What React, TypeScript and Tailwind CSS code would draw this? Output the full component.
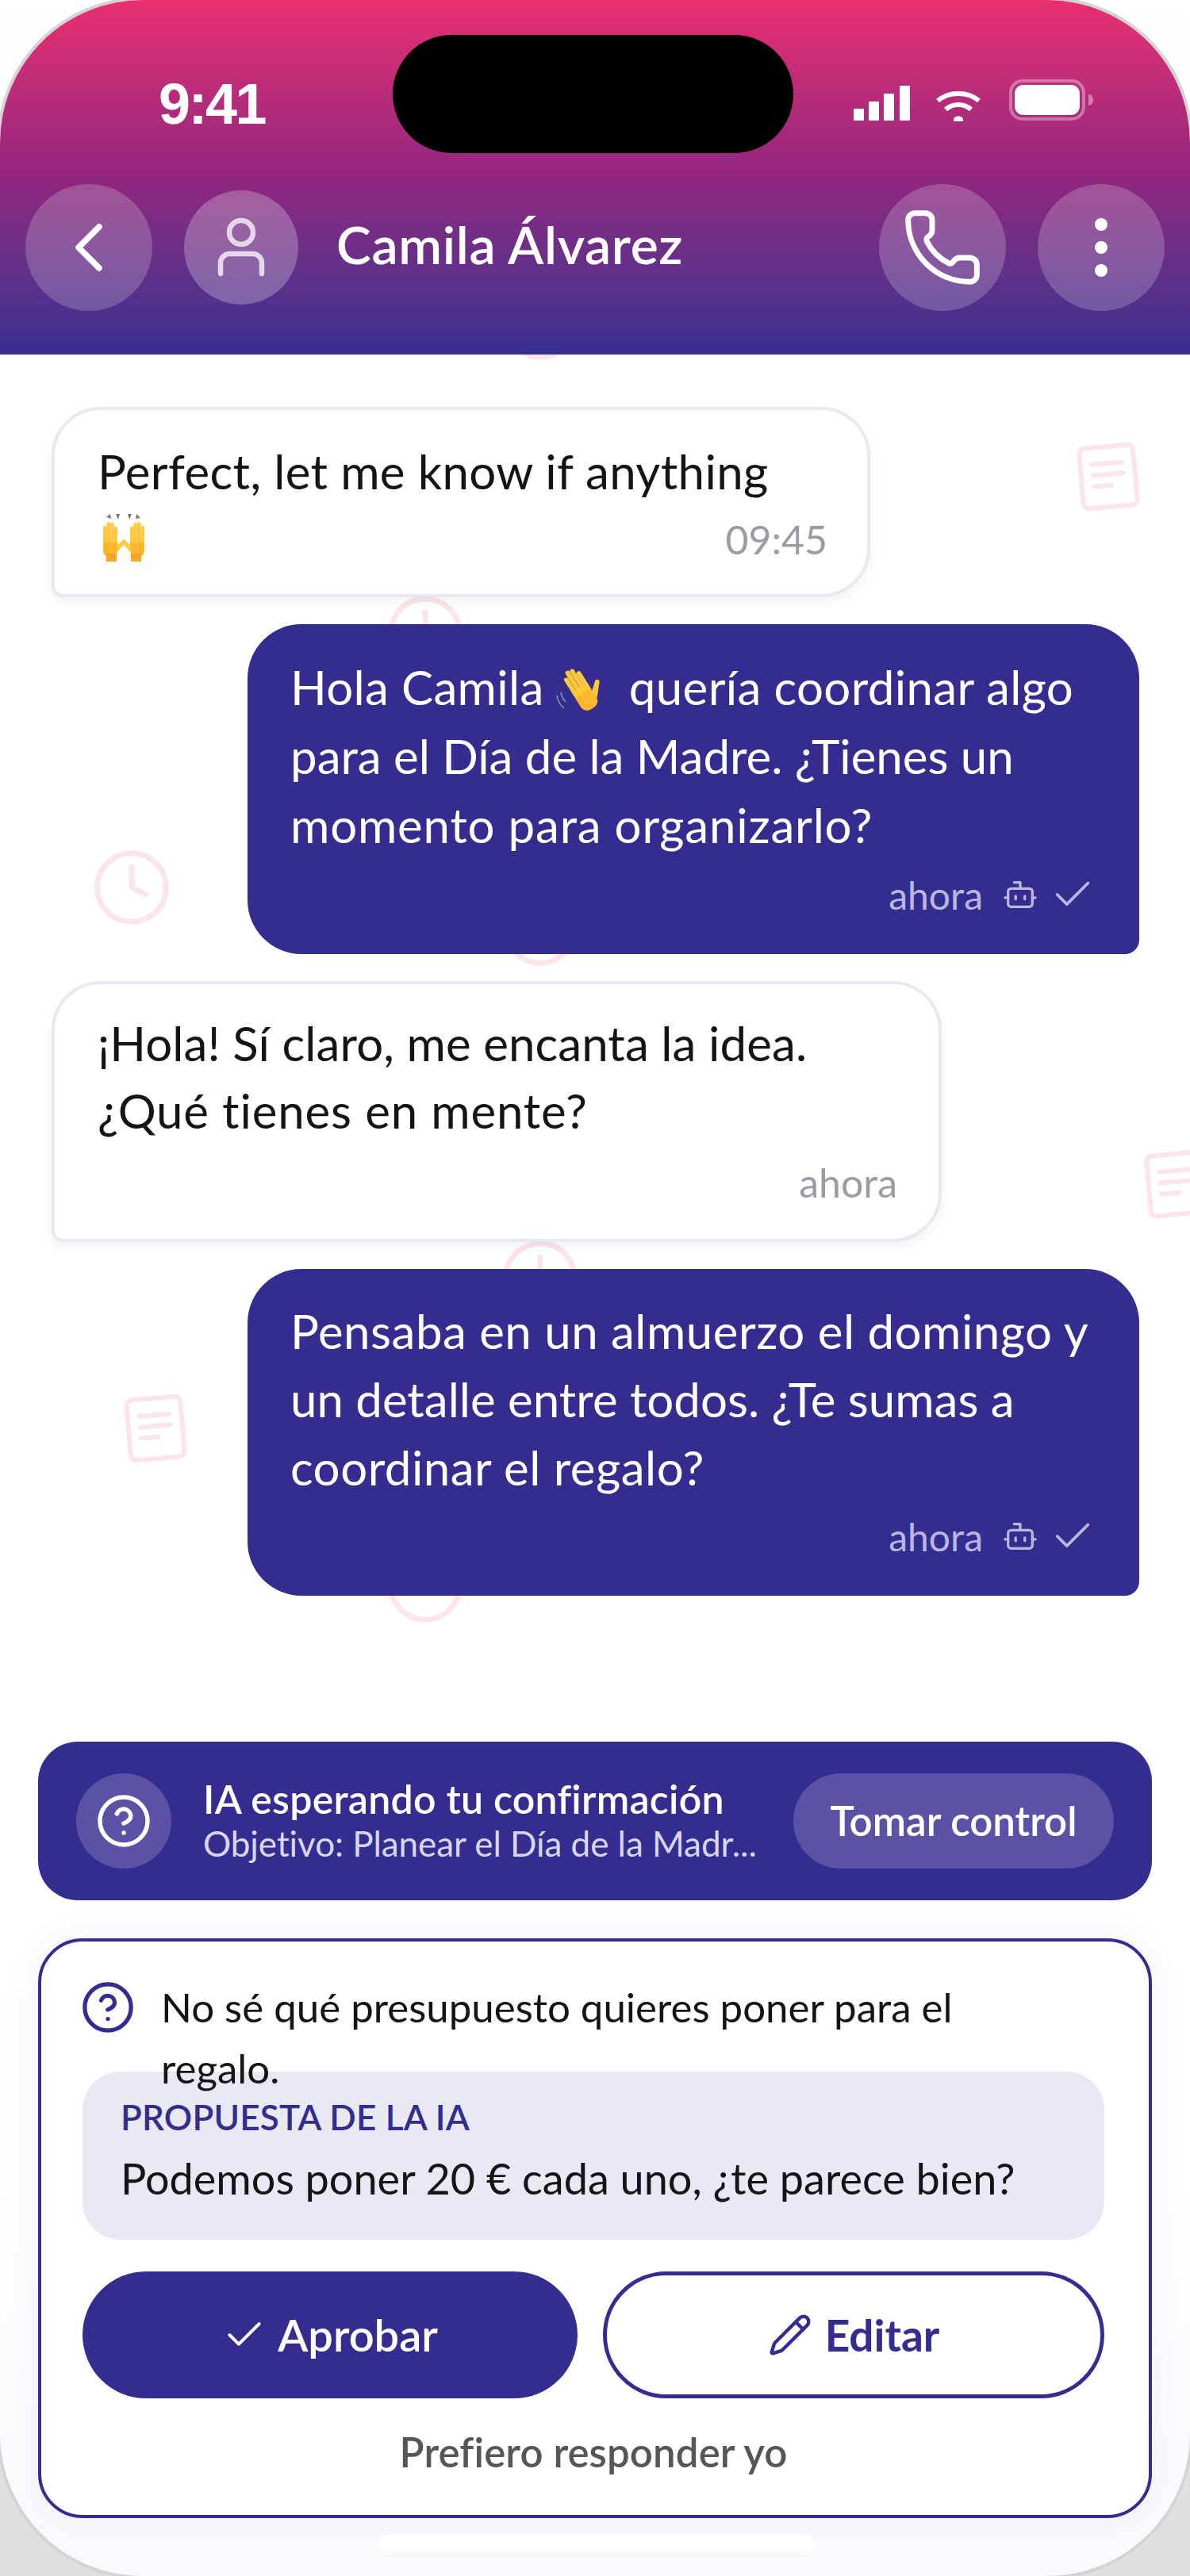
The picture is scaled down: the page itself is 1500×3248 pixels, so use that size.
import { Bot, Check, CircleHelp, Clock, Pencil, Phone } from "lucide-react";

const Hand = ({ x, y, s = 1, r = 0, flip = false }: { x: number; y: number; s?: number; r?: number; flip?: boolean }) => (
  <g transform={`translate(${x} ${y}) rotate(${r}) scale(${flip ? -s : s} ${s})`}>
    <rect x="-9" y="-4" width="18" height="24" rx="7" fill="#FFB52E" />
    <rect x="-9" y="-19" width="4.4" height="22" rx="2.2" fill="#FFC83D" />
    <rect x="-4.4" y="-24" width="4.4" height="27" rx="2.2" fill="#FFC83D" />
    <rect x="0.2" y="-23" width="4.4" height="26" rx="2.2" fill="#FFC83D" />
    <rect x="4.6" y="-18" width="4.4" height="21" rx="2.2" fill="#FFC83D" />
    <path d="M8 6 L16 -1 a2.2 2.2 0 0 1 3.2 3 L9 14 Z" fill="#FFC83D" />
  </g>
);

const RaisedHands = () => (
  <svg width="66" height="60" viewBox="0 0 66 60" className="block">
    <Hand x={16} y={34} s={1} />
    <Hand x={50} y={34} s={1} flip />
    <rect x="11" y="50" width="13" height="10" fill="#F5A623" />
    <rect x="42" y="50" width="13" height="10" fill="#F5A623" />
    <path d="M11 4l5-4 1 6zM23 0l5 0-2 7zM38 0l5 0-3 7zM49 0l5 5-6 1z" fill="#77767c" />
  </svg>
);

const Wave = () => (
  <svg width="60" height="66" viewBox="2 0 60 66" className="inline-block align-[-14px]">
    <Hand x={34} y={34} s={1.3} r={-32} />
    <path d="M3 40c1 7 4 12 9 16M8 36c1 5 3 9 6 12" stroke="#8d8db0" strokeWidth="1.6" fill="none" />
  </svg>
);

const Doc = ({ className }: { className: string }) => (
  <svg viewBox="0 0 80 88" className={className} fill="none" stroke="#fbe4ea" strokeLinecap="round" strokeLinejoin="round">
    <g transform="rotate(-5 40 44)">
      <rect x="6" y="6" width="68" height="76" rx="7" strokeWidth="6" />
      <path d="M21 27h38M21 41h38M21 55h22" strokeWidth="6" />
    </g>
  </svg>
);

const Meta = () => (
  <div className="flex items-center justify-end h-[64px] mt-[12px] pr-[55px] text-[48px] text-[#b9b7e0]">
    <span>ahora</span>
    <Bot size={46} strokeWidth={1.7} className="ml-[24px]" />
    <Check size={58} strokeWidth={1.6} className="ml-[14px]" />
  </div>
);

const BgClock = ({ className }: { className: string }) => (
  <Clock size={104} strokeWidth={1.6} color="#fbe4ea" className={className} />
);

export default function App() {
  return (
    <div className="relative w-[1500px] h-[3248px] overflow-hidden bg-gradient-to-b from-white to-[#dedede] font-['Lato',sans-serif]">
      <div className="relative h-[3248px] rounded-[180px] bg-gradient-to-b from-white via-white via-[85%] to-[#f8f8fd] shadow-[0_0_0_4px_#d4d4d4] overflow-hidden">
        <header className="relative z-10 h-[447px] bg-gradient-to-b from-[#e92e70] via-[#91247f] to-[#352e90] text-white">
          <div className="absolute left-[495px] top-[44px] w-[505px] h-[149px] rounded-full bg-black" />
          <div className="flex justify-between h-[232px] pl-[200px] pr-[122px] pt-[89px]">
            <span className="font-['Liberation_Sans',sans-serif] font-bold text-[72px] leading-[84px] tracking-[-2.5px]">9:41</span>
            <div className="flex items-start gap-[31px] pt-[15px]">
              <svg width="72" height="48" viewBox="0 0 72 48" fill="white" className="mt-[4px]">
                <rect x="0" y="29" width="13" height="15" rx="1" />
                <rect x="19" y="20" width="13" height="24" rx="1" />
                <rect x="38" y="10" width="13" height="34" rx="1" />
                <rect x="58" y="0" width="13" height="44" rx="1" />
              </svg>
              <svg width="58" height="44" viewBox="0 0 58 44" fill="none" stroke="white" strokeWidth="6" className="mt-[8px]">
                <path d="M3 15C17 3 41 3 55 15" />
                <path d="M13 26c9-8 23-8 32 0" />
                <path d="M23 39c0-6 12-6 12 0v2H23z" fill="white" stroke="none" />
              </svg>
              <div className="flex items-center ml-[4px]">
                <div className="w-[96px] h-[52px] rounded-[17px] border-[4px] border-white/35 p-[3px] mt-[-4px]">
                  <div className="w-full h-full rounded-[11px] bg-white" />
                </div>
                <div className="w-[6px] h-[14px] rounded-r-full bg-white/40 ml-[4px] mt-[-4px]" />
              </div>
            </div>
          </div>
          <div className="flex items-center h-[160px] px-[32px]">
            <button className="flex items-center justify-center w-[160px] h-[160px] rounded-full bg-white/20">
              <svg width="40" height="60" viewBox="0 0 40 60" fill="none" stroke="white" strokeWidth="7.5" strokeLinecap="round" strokeLinejoin="round">
                <path d="M33 4 7 30l26 26" />
              </svg>
            </button>
            <div className="flex items-center justify-center w-[144px] h-[144px] ml-[40px] rounded-full bg-white/25">
              <svg width="64" height="76" viewBox="0 0 64 76" fill="none" stroke="#e6d8ec" strokeWidth="6.5" strokeLinecap="round">
                <circle cx="32" cy="19" r="15" />
                <path d="M6 71V58c0-7 5-12 12-12h28c7 0 12 5 12 12v13" />
              </svg>
            </div>
            <h1 className="ml-[48px] mt-[-8px] text-[66px] font-semibold tracking-[0.65px] leading-[80px]">Camila Álvarez</h1>
            <button className="flex items-center justify-center w-[160px] h-[160px] ml-auto rounded-full bg-white/20">
              <Phone size={104} strokeWidth={1.6} />
            </button>
            <button className="flex items-center justify-center w-[160px] h-[160px] ml-[40px] rounded-full bg-white/20">
              <svg width="20" height="76" viewBox="0 0 20 76" fill="white">
                <ellipse cx="10" cy="9" rx="8" ry="8" />
                <ellipse cx="10" cy="38" rx="8" ry="8" />
                <ellipse cx="10" cy="67" rx="8" ry="8" />
              </svg>
            </button>
          </div>
        </header>

        <main className="relative h-[1749px]">
          <BgClock className="absolute left-[629px] top-[-92px]" />
          <Doc className="absolute left-[1354px] top-[110px] w-[86px] h-[88px]" />
          <BgClock className="absolute left-[484px] top-[299px]" />
          <BgClock className="absolute left-[114px] top-[620px]" />
          <BgClock className="absolute left-[629px] top-[672px]" />
          <Doc className="absolute left-[1439px] top-[1002px] w-[86px] h-[88px]" />
          <BgClock className="absolute left-[629px] top-[1112px]" />
          <Doc className="absolute left-[153px] top-[1310px] w-[86px] h-[88px]" />
          <BgClock className="absolute left-[484px] top-[1500px]" />

          <div className="relative flex flex-col gap-[34px] pt-[67px] pl-[65px] pr-[64px] text-[60px] leading-[87px]">
            <div className="w-[1032px] h-[240px] mt-[-1px] pt-[34px] pl-[54px] pr-[50px] bg-white border-[4px] border-[#e8e8f1] rounded-[62px] rounded-bl-[14px] shadow-[0_6px_14px_rgba(40,40,90,0.06)] text-[#141416]">
              <p className="whitespace-nowrap tracking-[0.37px]">Perfect, let me know if anything</p>
              <div className="flex justify-between items-start">
                <div className="mt-[10px]"><RaisedHands /></div>
                <span className="mt-[12px] text-[50px] leading-[60px] text-[#9b9ca3]">09:45</span>
              </div>
            </div>
            <div className="self-end w-[1124px] h-[416px] pt-[36px] pl-[54px] bg-[#342d8f] rounded-[68px] rounded-br-[18px] text-white">
              <p className="whitespace-nowrap tracking-[0.35px]">Hola Camila <Wave />&nbsp; quería coordinar algo</p>
              <p className="whitespace-nowrap">para el Día de la Madre. ¿Tienes un</p>
              <p className="whitespace-nowrap tracking-[0.8px]">momento para organizarlo?</p>
              <Meta />
            </div>
            <div className="w-[1122px] h-[329px] pt-[32px] pl-[54px] pr-[52px] bg-white border-[4px] border-[#e8e8f1] rounded-[62px] rounded-bl-[14px] shadow-[0_6px_14px_rgba(40,40,90,0.06)] text-[#141416]">
              <p className="whitespace-nowrap leading-[85px] tracking-[0.1px]">¡Hola! Sí claro, me encanta la idea.</p>
              <p className="whitespace-nowrap leading-[85px] tracking-[0.85px]">¿Qué tienes en mente?</p>
              <p className="text-right text-[50px] leading-[60px] mt-[18px] text-[#9b9ca3]">ahora</p>
            </div>
            <div className="self-end w-[1124px] h-[412px] pt-[35px] pl-[54px] bg-[#342d8f] rounded-[68px] rounded-br-[18px] text-white">
              <p className="whitespace-nowrap leading-[86px] tracking-[0.5px]">Pensaba en un almuerzo el domingo y</p>
              <p className="whitespace-nowrap leading-[86px]">un detalle entre todos. ¿Te sumas a</p>
              <p className="whitespace-nowrap leading-[86px] tracking-[0.5px]">coordinar el regalo?</p>
              <Meta />
            </div>
          </div>
        </main>

        <section className="flex items-center h-[200px] mx-[48px] px-[48px] bg-[#342d8f] rounded-[50px] text-white">
          <div className="flex items-center justify-center shrink-0 w-[120px] h-[120px] rounded-full bg-[#5a53a5]">
            <CircleHelp size={72} strokeWidth={1.8} />
          </div>
          <div className="ml-[40px] w-[703px]">
            <p className="text-[50px] leading-[56px] font-semibold whitespace-nowrap tracking-[0.25px]">IA esperando tu confirmación</p>
            <p className="text-[44px] leading-[56px] text-[#d8d7ee] whitespace-nowrap tracking-[-0.05px]">Objetivo: Planear el Día de la Madr...</p>
          </div>
          <button className="ml-auto w-[404px] h-[120px] rounded-full bg-[#5a53a5] text-[51px] font-semibold">Tomar control</button>
        </section>

        <section className="h-[731px] mt-[48px] mx-[48px] pt-[40px] pl-[52px] pr-[56px] bg-white border-[4px] border-[#342d8f] rounded-[56px] shadow-[0_0_44px_rgba(70,60,200,0.07)]">
          <div className="flex h-[124px]">
            <CircleHelp size={70} strokeWidth={1.8} color="#342d8f" className="shrink-0 ml-[-3px] mt-[8px]" />
            <p className="ml-[32px] mt-[4px] w-[1010px] text-[51px] leading-[77px] text-[#141416]">No sé qué presupuesto quieres poner para el regalo.</p>
          </div>
          <div className="h-[212px] pt-[31px] pl-[48px] rounded-[48px] bg-[#e8e9f2]">
            <p className="text-[44px] leading-[52px] font-semibold text-[#342d8f] whitespace-nowrap tracking-[0.2px]">PROPUESTA DE LA IA</p>
            <p className="mt-[20px] text-[54px] leading-[64px] text-[#141416] whitespace-nowrap">Podemos poner 20 € cada uno, ¿te parece bien?</p>
          </div>
          <div className="flex gap-[32px] mt-[40px]">
            <button className="flex items-center justify-center gap-[14px] w-[624px] h-[160px] rounded-full bg-[#342d8f] text-white text-[56px] font-semibold">
              <Check size={56} strokeWidth={1.7} />
              Aprobar
            </button>
            <button className="flex items-center justify-center gap-[16px] w-[632px] h-[160px] rounded-full border-[5px] border-[#342d8f] text-[#342d8f] text-[55px] font-bold">
              <Pencil size={56} strokeWidth={1.9} />
              Editar
            </button>
          </div>
          <p className="mt-[38px] text-center text-[51px] leading-[60px] font-semibold text-[#55565a] tracking-[0.1px]">Prefiero responder yo</p>
        </section>

        <div className="absolute left-[476px] top-[3196px] w-[552px] h-[21px] rounded-full bg-white" />
      </div>
    </div>
  );
}
